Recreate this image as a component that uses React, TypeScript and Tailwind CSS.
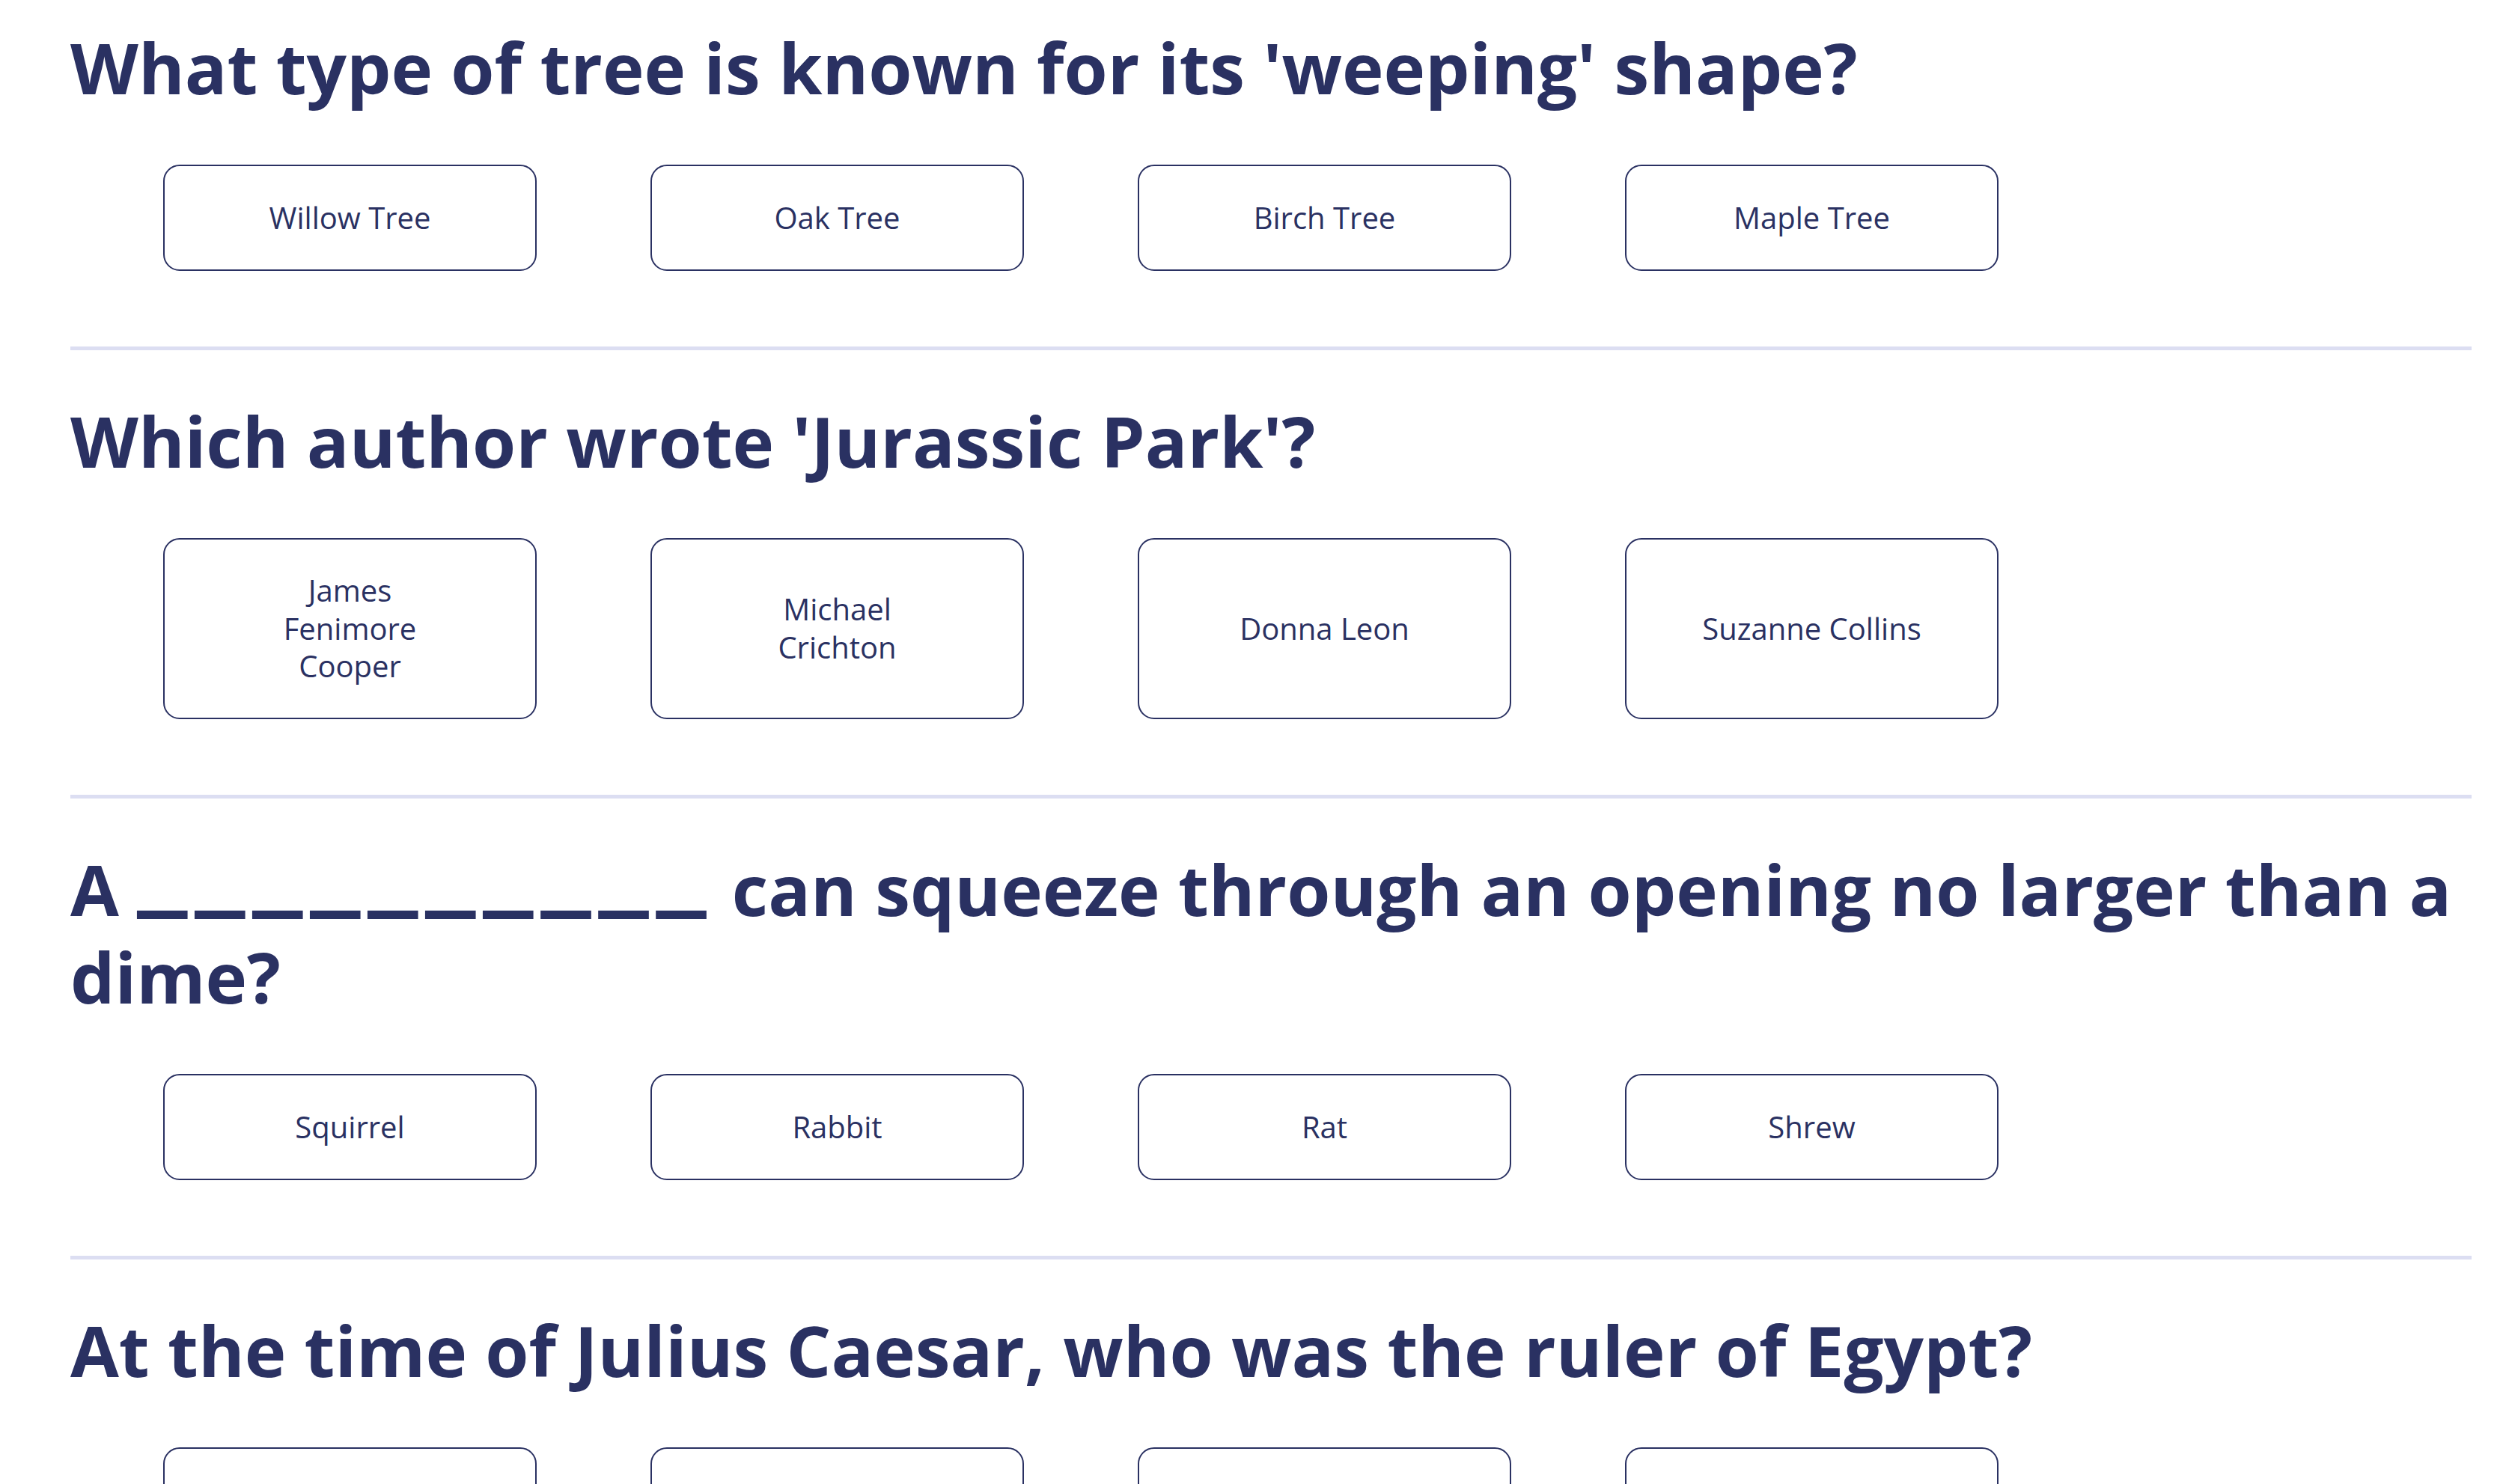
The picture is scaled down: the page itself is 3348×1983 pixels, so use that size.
import React from "react";

type Question = {
  title: React.ReactNode;
  options: string[];
};

const Blank = () => (
  <span className="text-[163px] leading-[0] tracking-[10px] align-[22px]">__________</span>
);

const questions: Question[] = [
  {
    title: "What type of tree is known for its 'weeping' shape?",
    options: ["Willow Tree", "Oak Tree", "Birch Tree", "Maple Tree"],
  },
  {
    title: "Which author wrote 'Jurassic Park'?",
    options: ["James\nFenimore\nCooper", "Michael\nCrichton", "Donna Leon", "Suzanne Collins"],
  },
  {
    title: (
      <>
        A <Blank /> can squeeze through an opening no larger than a dime?
      </>
    ),
    options: ["Squirrel", "Rabbit", "Rat", "Shrew"],
  },
  {
    title: "At the time of Julius Caesar, who was the ruler of Egypt?",
    options: ["Cleopatra", "Ptolemy XIII", "Mark Antony", "Ramesses II"],
  },
];

export default function App() {
  return (
    <div className="min-h-screen bg-white pl-[94px] pr-[46px] pt-[32px] font-['Open_Sans','Noto_Sans',sans-serif] text-[#2a3162]">
      {questions.map((q, i) => (
        <section key={i}>
          {i > 0 && <div className="mb-[63px] h-[5px] w-full bg-[#dcdef2]" />}
          <h2 className="m-0 text-[94px] font-bold leading-[117px]">{q.title}</h2>
          <div className="mt-[71px] ml-[124px] grid grid-cols-[repeat(4,499px)] gap-x-[152px]">
            {q.options.map((o) => (
              <button
                key={o}
                type="button"
                className="flex items-center justify-center rounded-[22px] border-2 border-[#2a3162] bg-white px-[20px] py-[43.5px] text-center text-[40px] font-normal leading-[50.5px] whitespace-pre-line text-[#2a3162]"
              >
                {o}
              </button>
            ))}
          </div>
          <div className="h-[101px]" />
        </section>
      ))}
    </div>
  );
}
